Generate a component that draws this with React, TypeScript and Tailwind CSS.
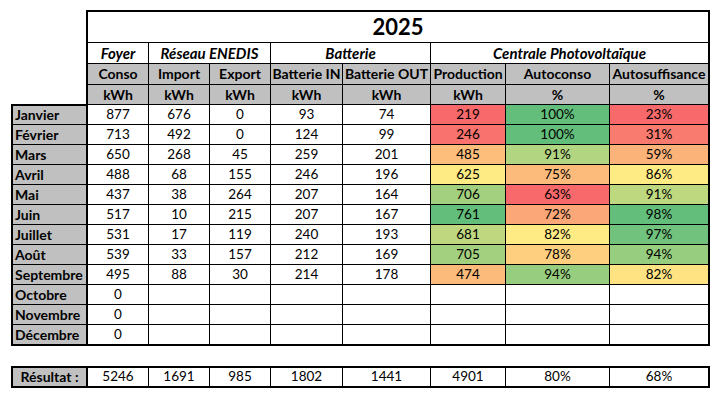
import React from "react";

type Row = {
  m: string;
  v: (string | number)[];
  c: string[];
};

const rows: Row[] = [
  { m: "Janvier", v: [877, 676, 0, 93, 74, 219, "100%", "23%"], c: ["bg-[#f8696b]", "bg-[#63be7b]", "bg-[#f8696b]"] },
  { m: "Février", v: [713, 492, 0, 124, 99, 246, "100%", "31%"], c: ["bg-[#f9726d]", "bg-[#63be7b]", "bg-[#f97a6e]"] },
  { m: "Mars", v: [650, 268, 45, 259, 201, 485, "91%", "59%"], c: ["bg-[#fdbe7b]", "bg-[#b1d580]", "bg-[#fcb379]"] },
  { m: "Avril", v: [488, 68, 155, 246, 196, 625, "75%", "86%"], c: ["bg-[#ffeb84]", "bg-[#fcbb7b]", "bg-[#ffeb84]"] },
  { m: "Mai", v: [437, 38, 264, 207, 164, 706, "63%", "91%"], c: ["bg-[#a2d07f]", "bg-[#f8696b]", "bg-[#bed880]"] },
  { m: "Juin", v: [517, 10, 215, 207, 167, 761, "72%", "98%"], c: ["bg-[#63be7b]", "bg-[#fba777]", "bg-[#63be7b]"] },
  { m: "Juillet", v: [531, 17, 119, 240, 193, 681, "82%", "97%"], c: ["bg-[#bfd880]", "bg-[#ffeb84]", "bg-[#70c27c]"] },
  { m: "Août", v: [539, 33, 157, 212, 169, 705, "78%", "94%"], c: ["bg-[#a3d07f]", "bg-[#fecf7f]", "bg-[#97cd7e]"] },
  { m: "Septembre", v: [495, 88, 30, 214, 178, 474, "94%", "82%"], c: ["bg-[#fcbb7b]", "bg-[#97cd7e]", "bg-[#ffe382]"] },
  { m: "Octobre", v: [0, "", "", "", "", "", "", ""], c: ["", "", ""] },
  { m: "Novembre", v: [0, "", "", "", "", "", "", ""], c: ["", "", ""] },
  { m: "Décembre", v: [0, "", "", "", "", "", "", ""], c: ["", "", ""] },
];

const colW = [
  "w-[61px] border-r",
  "w-[61px] border-r",
  "w-[61px] border-r",
  "w-[72px] border-r",
  "w-[88px] border-r",
  "w-[75px] border-r",
  "w-[104px] border-r",
  "w-[98px]",
];

const names = ["Conso", "Import", "Export", "Batterie IN", "Batterie OUT", "Production", "Autoconso", "Autosuffisance"];
const units = ["kWh", "kWh", "kWh", "kWh", "kWh", "kWh", "%", "%"];
const totals = ["5246", "1691", "985", "1802", "1441", "4901", "80%", "68%"];

function Cells({ values, bgs, bold }: { values: (string | number)[]; bgs?: string[]; bold?: boolean }) {
  return (
    <>
      {values.map((v, i) => (
        <div
          key={i}
          className={`${colW[i]} ${i >= 5 && bgs ? bgs[i - 5] : ""} h-full shrink-0 border-black flex items-center justify-center ${bold ? "font-bold text-[14px]" : "text-[13.5px]"}`}
        >
          {v}
        </div>
      ))}
    </>
  );
}

export default function App() {
  return (
    <div className="w-[720px] h-[400px] bg-white pt-[10px] pl-[11px] text-black font-['Lato',sans-serif] leading-none">
      {/* Header */}
      <div className="ml-[75px] w-[624px] border-l-2 border-t-2 border-r-2 border-black">
        <div className="h-[31px] border-b border-black flex items-center justify-center text-[22px] font-bold">
          2025
        </div>
        <div className="h-[21px] border-b border-black flex italic font-bold text-[15px]">
          <div className="w-[61px] border-r border-black flex items-center justify-center">Foyer</div>
          <div className="w-[122px] border-r border-black flex items-center justify-center">Réseau ENEDIS</div>
          <div className="w-[160px] border-r border-black flex items-center justify-center">Batterie</div>
          <div className="w-[277px] flex items-center justify-center">Centrale Photovoltaïque</div>
        </div>
        <div className="h-[21px] border-b border-black flex bg-[#c0c0c0]">
          <Cells values={names} bold />
        </div>
        <div className="h-[19px] flex bg-[#c0c0c0]">
          <Cells values={units} bold />
        </div>
      </div>

      {/* Body */}
      <div className="flex">
        <div className="w-[77px] border-2 border-black bg-[#c0c0c0] font-bold text-[14px]">
          {rows.map((r, i) => (
            <div
              key={r.m}
              className={`${i === 0 || i === rows.length - 1 ? "h-[19px]" : "h-[20px]"} ${i < rows.length - 1 ? "border-b" : ""} border-black flex items-center pl-[2px]`}
            >
              {r.m}
            </div>
          ))}
        </div>
        <div className="w-[622px] border-t border-r-2 border-b-2 border-black">
          {rows.map((r, i) => (
            <div
              key={r.m}
              className={`${i === rows.length - 1 ? "h-[19px]" : "h-[20px] border-b"} border-black flex`}
            >
              <Cells values={r.v} bgs={r.c} />
            </div>
          ))}
        </div>
      </div>

      {/* Result */}
      <div className="flex mt-[20px]">
        <div className="w-[77px] h-[22px] border-2 border-black bg-[#c0c0c0] font-bold text-[14px] flex items-center justify-center">
          Résultat :
        </div>
        <div className="w-[622px] h-[22px] border-t-2 border-b-2 border-r-2 border-black flex">
          <Cells values={totals} />
        </div>
      </div>
    </div>
  );
}
